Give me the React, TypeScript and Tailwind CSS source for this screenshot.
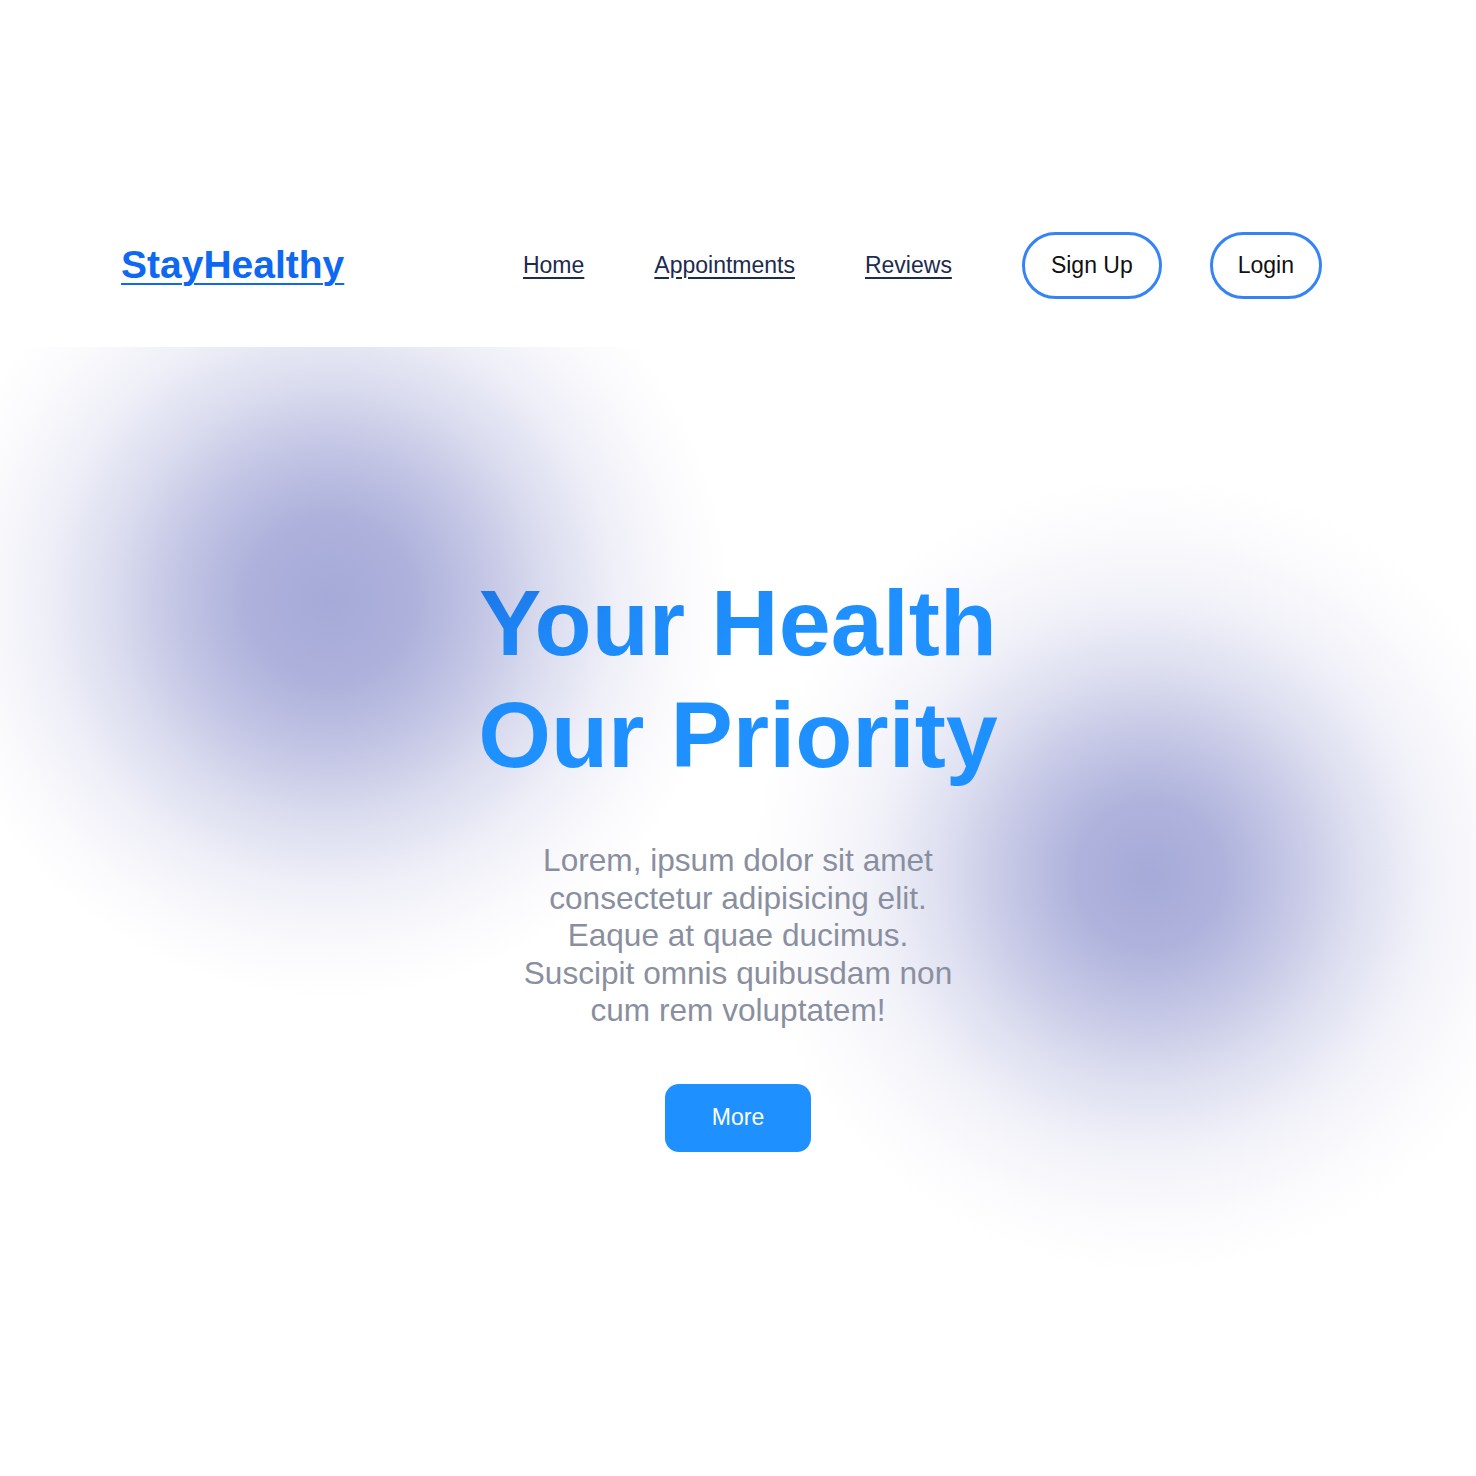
import React from "react";

export default function App() {
  return (
    <div className="min-h-[1476px] w-full bg-white font-['Liberation_Sans',Arial,sans-serif]">
      <header className="flex h-[347px] items-start justify-between pl-[121px] pr-[154px] pt-[232px]">
        <a href="#" className="flex h-[67px] items-center text-[39px] font-bold text-[#0f68f2] underline underline-offset-[5px] decoration-[2px]">
          StayHealthy
        </a>
        <nav className="flex h-[67px] items-center">
          <ul className="flex items-center gap-[70px] text-[23px] text-[#1d2b4e]">
            <li><a href="#" className="underline underline-offset-[4px]">Home</a></li>
            <li><a href="#" className="underline underline-offset-[4px]">Appointments</a></li>
            <li><a href="#" className="underline underline-offset-[4px]">Reviews</a></li>
          </ul>
          <div className="ml-[70px] flex items-center gap-[48px] text-[23px] text-[#111111]">
            <button className="flex h-[67px] items-center rounded-full border-[3px] border-[#3484f4] px-[26px]">Sign Up</button>
            <button className="flex h-[67px] items-center rounded-full border-[3px] border-[#3484f4] px-[25px]">Login</button>
          </div>
        </nav>
      </header>

      <section className="relative h-[1129px] overflow-hidden">
        <div className="pointer-events-none absolute left-[-70px] top-[-147px] h-[800px] w-[800px] rounded-full bg-[radial-gradient(circle_closest-side,rgba(166,170,216,1)_0%,rgba(166,170,216,0.92)_20%,rgba(166,170,216,0.68)_38%,rgba(166,170,216,0.4)_55%,rgba(166,170,216,0.18)_72%,rgba(166,170,216,0.06)_87%,rgba(166,170,216,0)_100%)]" />
        <div className="pointer-events-none absolute left-[750px] top-[128px] h-[800px] w-[800px] rounded-full bg-[radial-gradient(circle_closest-side,rgba(166,170,216,1)_0%,rgba(166,170,216,0.9)_18%,rgba(166,170,216,0.64)_36%,rgba(166,170,216,0.36)_53%,rgba(166,170,216,0.15)_70%,rgba(166,170,216,0.05)_86%,rgba(166,170,216,0)_100%)]" />

        <div className="relative flex flex-col items-center pt-[220px] text-center">
          <h1 className="bg-[linear-gradient(160deg,#1c72e2_0%,#1e8af8_25%,#1e90ff_45%,#1e90ff_100%)] bg-clip-text text-[93.5px] font-bold leading-[112px] text-transparent">
            Your Health
            <br />
            Our Priority
          </h1>
          <p className="mt-[51px] w-[445px] text-[31.6px] leading-[37.5px] text-[#8a8fa0]">
            Lorem, ipsum dolor sit amet consectetur adipisicing elit. Eaque at quae ducimus. Suscipit omnis quibusdam non cum rem voluptatem!
          </p>
          <button className="mt-[54px] flex h-[68px] w-[146px] items-center justify-center rounded-[14px] bg-[#1e90ff] text-[23px] text-white">
            More
          </button>
        </div>
      </section>
    </div>
  );
}
